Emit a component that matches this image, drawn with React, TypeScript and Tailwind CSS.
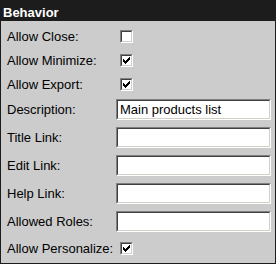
import React from "react";

const CheckMark = () => (
  <svg width="7" height="7" viewBox="0 0 7 7" shapeRendering="crispEdges" className="block">
    <path
      d="M6 0h1v1h-1z M5 1h2v1h-2z M0 2h1v1h-1z M4 2h3v1h-3z M0 3h2v1h-2z M3 3h3v1h-3z M0 4h5v1h-5z M1 5h3v1h-3z M2 6h1v1h-1z"
      fill="#000"
    />
  </svg>
);

const Check = ({ checked }: { checked: boolean }) => (
  <div className="ml-[4px] mt-[6px] w-[13px] h-[13px] border border-t-[#808080] border-l-[#808080] border-b-[#ffffff] border-r-[#ffffff]">
    <div className="w-full h-full border border-t-[#404040] border-l-[#404040] border-b-[#d4d0c8] border-r-[#d4d0c8] bg-white flex items-start justify-start p-[1px]">
      {checked && <CheckMark />}
    </div>
  </div>
);

const Field = ({ value }: { value?: string }) => (
  <div className="mt-[3px] w-[155px] h-[21px] border border-t-[#808080] border-l-[#808080] border-b-[#ffffff] border-r-[#ffffff]">
    <div className="w-full h-full border border-t-[#404040] border-l-[#404040] border-b-[#d4d0c8] border-r-[#d4d0c8] bg-white flex items-center pl-[2px] text-[13px] leading-[15px] text-black">
      {value}
    </div>
  </div>
);

type Row = { label: string; kind: "check" | "text"; checked?: boolean; value?: string };

const rows: Row[] = [
  { label: "Allow Close:", kind: "check", checked: false },
  { label: "Allow Minimize:", kind: "check", checked: true },
  { label: "Allow Export:", kind: "check", checked: true },
  { label: "Description:", kind: "text", value: "Main products list" },
  { label: "Title Link:", kind: "text" },
  { label: "Edit Link:", kind: "text" },
  { label: "Help Link:", kind: "text" },
  { label: "Allowed Roles:", kind: "text" },
  { label: "Allow Personalize:", kind: "check", checked: true },
];

export default function App() {
  return (
    <div
      className="w-[276px] h-[264px] bg-[#cccccc] border-l border-r border-b border-[#1c1c1c] flex flex-col text-black"
      style={{ fontFamily: '"Liberation Sans", Arial, sans-serif' }}
    >
      <div className="h-[21px] bg-[#1c1c1c] text-white font-bold text-[13px] leading-[15px] pt-[5px] pl-[2px]">
        Behavior
      </div>
      <div className="pt-[3px] flex flex-col">
        {rows.map((r) => (
          <div
            key={r.label}
            className={`flex items-start ${r.kind === "check" ? "h-[24px]" : "h-[28px]"}`}
          >
            <div
              className={`w-[115px] pl-[6px] text-[13px] leading-[15px] whitespace-nowrap ${
                r.kind === "check" ? "mt-[5px]" : "mt-[6px]"
              }`}
            >
              {r.label}
            </div>
            {r.kind === "check" ? <Check checked={!!r.checked} /> : <Field value={r.value} />}
          </div>
        ))}
      </div>
    </div>
  );
}
